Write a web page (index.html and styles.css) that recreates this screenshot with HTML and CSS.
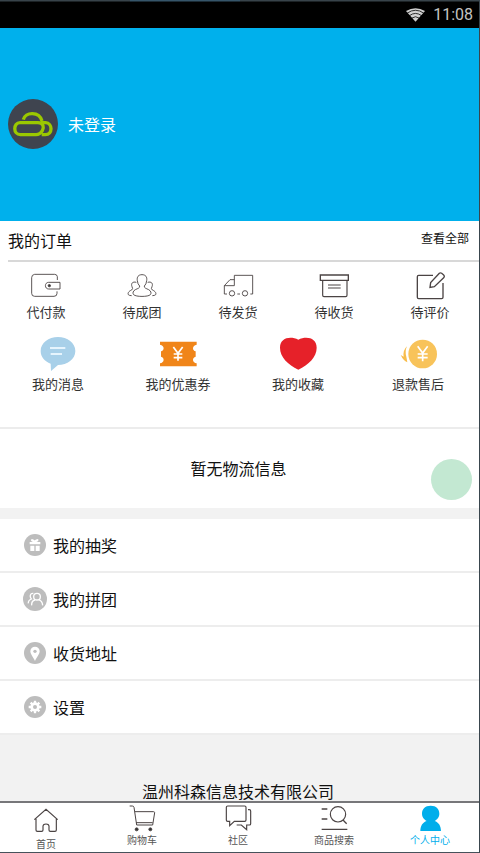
FILE: index.html
```html
<!DOCTYPE html>
<html lang="zh-CN">
<head>
<meta charset="utf-8">
<title>个人中心</title>
<link rel="stylesheet" href="styles.css">
</head>
<body>
<div class="phone">
  <header class="status">
    <svg class="wifi" viewBox="0 0 60 42"><path d="M30 42L0 8Q30-8 60 8Z" fill="#d0d0d0"/><path d="M4 15Q30-3 56 15M11 23Q30 9 49 23M18 31Q30 22 42 31" fill="none" stroke="#000" stroke-width="2.5"/></svg>
    <span>11:08</span>
  </header>
  <section class="hero">
    <svg class="avatar" viewBox="0 0 150 150"><circle cx="75" cy="75" r="75" fill="#3f444f"/><g fill="none" stroke="#9bc800" stroke-width="10"><path d="M46 62C51 38 94 36 102 66"/><path d="M36 71H88C108 70 108 87 103 95Q96 107 84 107H37C15 107 15 71 36 71Z"/><path d="M98 71H113C134 72 135 107 112 107H101"/></g></svg>
    <span>未登录</span>
  </section>
  <section class="orders">
    <div class="orders-head"><h2>我的订单</h2><a>查看全部</a></div>
    <div class="states">
      <div class="state"><svg class="line" viewBox="0 0 96 84"><path d="M82 24V14Q81 7 74 7H14Q5 8 5 17V64Q5 73 14 73H72Q81 73 81 64V58M90 31H56C43 31 43 51 56 51H90Z"/><circle cx="58" cy="41" r="3.5" fill="#333"/></svg><span>代付款</span></div>
      <div class="state"><svg class="line" viewBox="0 0 96 84"><path d="M48 8C37 8 32 15 34 26Q35 37 41 42C42 48 36 49 28 53C21 57 19 63 23 68C29 75 67 75 73 68C77 63 75 57 68 53C60 49 54 48 55 42Q61 37 62 26C64 15 59 8 48 8ZM31 31C20 28 14 34 18 44Q22 50 17 54C7 58 5 64 7 68Q10 71 17 71M65 31C76 28 82 34 78 44Q74 50 79 54C89 58 91 64 89 68Q86 71 79 71"/></svg><span>待成团</span></div>
      <div class="state"><svg class="line" viewBox="0 0 96 84"><path d="M37 41V10H92V66H85M37 23H24L7 41V66H15M7 41H37M46 66H54"/><circle cx="30" cy="64" r="8"/><circle cx="69" cy="64" r="8"/></svg><span>待发货</span></div>
      <div class="state"><svg class="line" viewBox="0 0 96 84"><path d="M7 9H91V25H7Z" stroke-width="4"/><path d="M14 25V70Q14 74 18 74H83Q87 74 87 70V25M30 39H68M30 48H68" stroke-width="3.5"/></svg><span>待收货</span></div>
      <div class="state"><svg class="line" viewBox="0 0 96 84"><path d="M57 10H14Q10 10 10 14V76Q10 80 14 80H83Q87 80 87 76V33M48 46L50 32L76 4Q79 1 83 4L89 9Q93 13 89 17L61 44Z" stroke-width="4"/></svg><span>待评价</span></div>
    </div>
    <div class="services">
      <div class="service"><svg viewBox="0 0 120 114"><path d="M60 6C88 6 112 24 112 48C112 73 88 90 60 90L39 108L38 86C20 79 8 66 8 48C8 24 32 6 60 6Z" fill="#a8d0e9"/><path d="M36 39H82M38 57H72" stroke="#e6f4fd" stroke-width="6"/></svg><span>我的消息</span></div>
      <div class="service"><svg viewBox="0 0 120 114"><path d="M6 20H116V29C102 32 102 46 113 49V65C102 68 102 82 116 85V94H6V85C20 82 20 68 9 65V49C20 46 20 32 6 29Z" fill="#f08519"/><path class="yen" d="M46 36L60 55L74 36M60 55V77M47 57H73M47 68H73"/></svg><span>我的优惠券</span></div>
      <div class="service"><svg viewBox="0 0 120 114"><path d="M61 104C30 89 6 66 6 38C6 8 37 2 61 14C85 2 116 8 116 38C116 66 92 89 61 104Z" fill="#e62129"/></svg><span>我的收藏</span></div>
      <div class="service"><svg viewBox="0 0 120 114"><circle cx="74" cy="57" r="43" fill="#f8c35a"/><path d="M27 34Q14 46 17 65L8 60Q16 77 28 82L25 65Q20 49 27 34Z" fill="#f8bd4c"/><path class="yen" d="M59 34L74 54L89 34M74 54V79M59 57H89M59 68H89"/></svg><span>退款售后</span></div>
    </div>
  </section>
  <section class="logistics">暂无物流信息</section>
  <nav class="menu">
    <a class="row"><svg viewBox="0 0 72 72"><circle cx="36" cy="36" r="33" fill="#bdbdbd"/><g fill="#fff"><path d="M20 27H52V34H20ZM22 38H34V54H22ZM38 38H50V54H38Z"/></g><path d="M35 25C24 15 21 24 35 26C49 24 47 15 35 25" fill="none" stroke="#fff" stroke-width="4"/></svg><span>我的抽奖</span></a>
    <a class="row"><svg viewBox="0 0 72 72"><circle cx="36" cy="36" r="36" fill="#bdbdbd"/><g fill="none" stroke="#fff" stroke-width="4"><circle cx="42" cy="29" r="10"/><path d="M26 55Q25 42 36 39M47 38Q58 42 59 55M31 19C21 18 19 29 25 36Q15 40 16 49"/></g></svg><span>我的拼团</span></a>
    <a class="row"><svg viewBox="0 0 72 72"><circle cx="36" cy="36" r="33" fill="#bdbdbd"/><path d="M36 60C31 48 22 40 22 31A14 14 0 0 1 50 31C50 40 41 48 36 60Z" fill="#fff"/><circle cx="36" cy="31" r="5" fill="#bdbdbd"/></svg><span>收货地址</span></a>
    <a class="row"><svg viewBox="0 0 72 72"><circle cx="36" cy="36" r="33" fill="#bdbdbd"/><circle cx="36" cy="36" r="10" fill="none" stroke="#fff" stroke-width="8"/><path d="M36 17V25M36 47V55M17 36H25M47 36H55M23 23L28 28M44 44L49 49M49 23L44 28M28 44L23 49" stroke="#fff" stroke-width="7"/></svg><span>设置</span></a>
  </nav>
  <footer class="company">温州科森信息技术有限公司</footer>
  <nav class="tabs">
    <a class="tab home"><svg class="line" viewBox="0 0 96 84"><path d="M13 47L48 16L83 47M18 44V78Q18 82 22 82H35Q39 82 39 78V66Q40 60 48 60T57 66V78Q57 82 61 82H75Q79 82 79 78V44" stroke-width="3.5"/></svg><span>首页</span></a>
    <a class="tab"><svg class="line" viewBox="0 0 96 84"><path d="M11 6H19Q23 6 24 10L32 63H80L86 26Q86 23 82 23H27M30 56H80" stroke-width="3"/><circle cx="32" cy="76" r="4.5" fill="#333"/><circle cx="73" cy="76" r="4.5" fill="#333"/></svg><span>购物车</span></a>
    <a class="tab"><svg class="line" viewBox="0 0 96 84"><path d="M17 6H68Q72 6 72 10V48Q72 52 68 52H37L23 65V52H17Q13 52 13 48V10Q13 6 17 6ZM78 17H82Q86 17 86 21V59Q86 63 82 63H74V77L58 63H44" stroke-width="3.5"/></svg><span>社区</span></a>
    <a class="tab"><svg class="line" viewBox="0 0 96 84"><circle cx="60" cy="31" r="23" stroke-width="3.5"/><path d="M75 48L86 59M11 15H28M11 45H28M11 76H88" stroke-width="4"/></svg><span>商品搜索</span></a>
    <a class="tab active"><svg viewBox="0 0 96 84"><path d="M50 5C67 5 76 15 76 29C76 40 69 46 62 51C74 55 81 66 81 81H19C19 66 26 55 38 51C31 46 24 40 24 29C24 15 33 5 50 5Z" fill="#00aeeb"/></svg><span>个人中心</span></a>
  </nav>
  <div class="floating"></div>
</div>
</body>
</html>
```

FILE: styles.css
```css
* { box-sizing: border-box; }
body { margin: 0; }
.phone {
  position: relative;
  width: 480px;
  height: 853px;
  overflow: hidden;
  display: flex;
  flex-direction: column;
  background: #fff;
  border-right: 1px solid #39454d;
  border-bottom: 1px solid #46525b;
  color: #111;
  font: 16px/20px "Noto Sans CJK SC", sans-serif;
}
svg { display: block; flex: none; }
.line { fill: none; stroke: #4b4444; stroke-width: 2.7; }
.yen { fill: none; stroke: #fff; stroke-width: 5; }

.status {
  height: 28px;
  flex: none;
  display: flex;
  align-items: center;
  justify-content: flex-end;
  gap: 8px;
  padding: 2px 6px 0 0;
  background: linear-gradient(90deg, #38434a 130px, #36556a 130px 240px, #38434a 240px) top / 100% 1.5px no-repeat #000;
  color: #c4c4c4;
  font: 16px/20px Roboto, sans-serif;
}
.wifi { width: 19px; height: 14px; }
.hero {
  height: 193px;
  flex: none;
  display: flex;
  align-items: center;
  gap: 10px;
  padding: 0 0 2px 8px;
  background: #00b0ec;
  color: #fff;
}
.avatar { width: 50px; height: 50px; }

.orders { height: 208px; flex: none; border-bottom: 2px solid #ececec; }
.orders-head {
  height: 41px;
  margin-left: 8px;
  padding: 0 10px 0 0;
  display: flex;
  justify-content: space-between;
  border-bottom: 2px solid #d8d8d8;
}
.orders-head h2 { margin: 9px 0 0; font-size: 16px; font-weight: 400; }
.orders-head a { margin-top: 7px; font-size: 12px; }
.states, .services, .tabs { display: grid; width: 480px; margin-left: -2px; }
.states { grid-template-columns: repeat(5, 1fr); padding-top: 10px; }
.state, .service { display: flex; flex-direction: column; align-items: center; font-size: 13px; color: #333; }
.state svg { width: 32px; height: 28px; }
.state span { margin-top: 2px; }
.services { grid-template-columns: repeat(4, 1fr); padding-top: 13px; }
.service svg { width: 40px; height: 38px; }
.service span { margin-top: 1px; }

.logistics { height: 79px; flex: none; display: flex; align-items: center; justify-content: center; padding: 0 2px 2px 0; }
.menu { border-top: 11px solid #f2f2f2; flex: none; }
.row { height: 54px; display: flex; align-items: center; gap: 6px; padding-left: 23px; border-bottom: 2px solid #ededed; }
.row svg { width: 24px; height: 24px; }
.row span { padding-bottom: 1px; }
.company { flex: 1; padding: 46px 3px 0 0; text-align: center; background: #f2f2f2; }

.tabs {
  grid-template-columns: repeat(5, 96px);
  height: 51px;
  flex: none;
  width: 482px;
  border-top: 2px solid #77777a;
  background: #fff;
}
.tab { display: flex; flex-direction: column; align-items: center; padding-top: 1px; font-size: 10px; line-height: 14px; color: #555; }
.tab svg { width: 32px; height: 28px; }
.tab span { margin-top: 1px; }
.home span { margin-top: 5px; }
.active { color: #00aeeb; }
.floating { position: absolute; left: 431px; top: 459px; width: 41px; height: 41px; border-radius: 50%; background: #c3e8d2; }
```
